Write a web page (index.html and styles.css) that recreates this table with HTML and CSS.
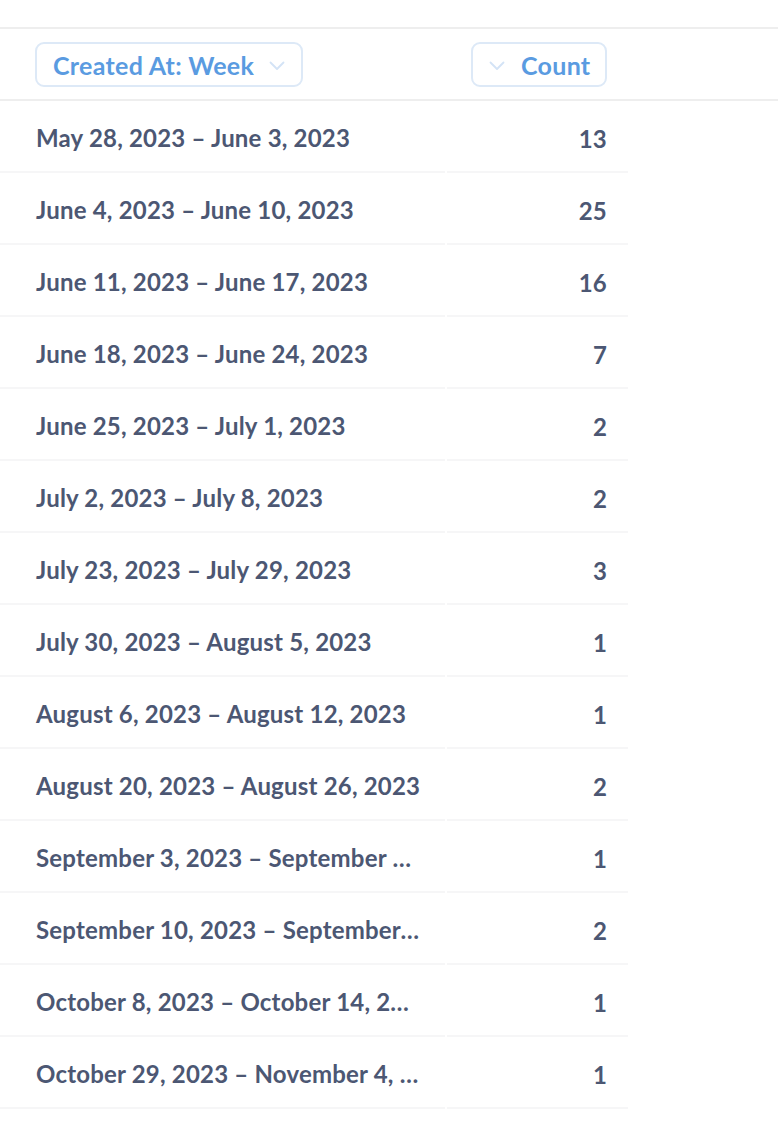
FILE: index.html
```html
<!DOCTYPE html>
<html>
<head>
<meta charset="utf-8">
<link rel="stylesheet" href="styles.css">
</head>
<body>
<div class="page">
  <div class="header">
    <div class="hcell hcell-dim">
      <div class="pill">
        <span class="pill-label">Created At: Week</span>
        <svg class="chev" width="16" height="10" viewBox="0 0 16 10"><path d="M1.5 1.5L8 8l6.5-6.5" fill="none" stroke="currentColor" stroke-width="1.8" stroke-linecap="round" stroke-linejoin="round"/></svg>
      </div>
    </div>
    <div class="hcell hcell-metric">
      <div class="pill pill-right">
        <svg class="chev" width="16" height="10" viewBox="0 0 16 10"><path d="M1.5 1.5L8 8l6.5-6.5" fill="none" stroke="currentColor" stroke-width="1.8" stroke-linecap="round" stroke-linejoin="round"/></svg>
        <span class="pill-label">Count</span>
      </div>
    </div>
  </div>
  <div class="rows">
    <div class="row"><div class="cell dim">May 28, 2023 – June 3, 2023</div><div class="cell num">13</div></div>
    <div class="row"><div class="cell dim">June 4, 2023 – June 10, 2023</div><div class="cell num">25</div></div>
    <div class="row"><div class="cell dim">June 11, 2023 – June 17, 2023</div><div class="cell num">16</div></div>
    <div class="row"><div class="cell dim">June 18, 2023 – June 24, 2023</div><div class="cell num">7</div></div>
    <div class="row"><div class="cell dim">June 25, 2023 – July 1, 2023</div><div class="cell num">2</div></div>
    <div class="row"><div class="cell dim">July 2, 2023 – July 8, 2023</div><div class="cell num">2</div></div>
    <div class="row"><div class="cell dim">July 23, 2023 – July 29, 2023</div><div class="cell num">3</div></div>
    <div class="row"><div class="cell dim">July 30, 2023 – August 5, 2023</div><div class="cell num">1</div></div>
    <div class="row"><div class="cell dim">August 6, 2023 – August 12, 2023</div><div class="cell num">1</div></div>
    <div class="row"><div class="cell dim">August 20, 2023 – August 26, 2023</div><div class="cell num">2</div></div>
    <div class="row"><div class="cell dim">September 3, 2023 – September 9, 2023</div><div class="cell num">1</div></div>
    <div class="row"><div class="cell dim">September 10, 2023 – September 16, 2023</div><div class="cell num">2</div></div>
    <div class="row"><div class="cell dim">October 8, 2023 – October 14, 2023</div><div class="cell num">1</div></div>
    <div class="row"><div class="cell dim">October 29, 2023 – November 4, 2023</div><div class="cell num">1</div></div>
  </div>
</div>
</body>
</html>
```

FILE: styles.css
```css
html, body {
  margin: 0;
  padding: 0;
  background: #ffffff;
}
body {
  font-family: "Lato", "Noto Sans", sans-serif;
  font-weight: 700;
  color: #4c5773;
}
.page {
  padding-top: 27px;
}
.header {
  display: grid;
  grid-template-columns: 445px 162px;
  border-top: 2px solid #eeeeee;
  border-bottom: 2px solid #eeeeee;
  height: 70px;
  align-items: center;
}
.hcell-dim {
  padding-left: 35px;
}
.hcell-metric {
  display: flex;
  justify-content: flex-end;
}
.pill {
  display: inline-flex;
  align-items: center;
  box-sizing: border-box;
  height: 45px;
  border: 2px solid #dde9f7;
  border-radius: 9px;
  color: #5a9be1;
  font-size: 25px;
  letter-spacing: 0.3px;
  padding: 0 16px;
}
.pill-label {
  margin-top: 2px;
}
.hcell-dim .pill {
  width: 268px;
  justify-content: space-between;
}
.pill-right {
  width: 136px;
  gap: 16px;
}
.chev {
  color: #d3e3f6;
  flex: none;
  margin-top: 3px;
}
.rows {
  display: flex;
  flex-direction: column;
}
.row {
  display: grid;
  grid-template-columns: 445px 181px;
  column-gap: 2px;
  height: 72px;
}
.cell {
  display: flex;
  align-items: center;
  border-bottom: 2px solid #f6f6f7;
  font-size: 24px;
  letter-spacing: 0.2px;
  box-sizing: border-box;
  padding-top: 4px;
}
.cell.dim {
  padding-left: 36px;
  padding-right: 24.5px;
  overflow: hidden;
  white-space: nowrap;
  display: block;
  line-height: 74px;
  text-overflow: ellipsis;
  padding-top: 0;
}
.cell.num {
  justify-content: flex-end;
  padding-right: 21px;
}
```
